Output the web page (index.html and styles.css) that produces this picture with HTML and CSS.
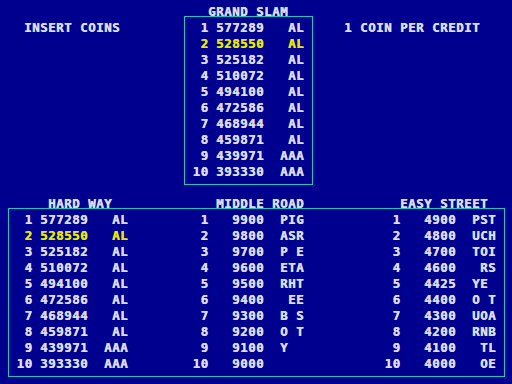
FILE: index.html
```html
<!DOCTYPE html>
<html>
<head>
<meta charset="utf-8">
<title>High Scores</title>
<link rel="stylesheet" href="styles.css">
</head>
<body>
<div class="screen">
  <div class="top">
    <div class="insert">INSERT COINS</div>
    <div class="grand">
      <div class="title">GRAND SLAM</div>
      <div class="board small">
        <div class="row"><span class="rank">1</span><span class="score">577289</span><span class="name"> AL</span></div>
        <div class="row hi"><span class="rank">2</span><span class="score">528550</span><span class="name"> AL</span></div>
        <div class="row"><span class="rank">3</span><span class="score">525182</span><span class="name"> AL</span></div>
        <div class="row"><span class="rank">4</span><span class="score">510072</span><span class="name"> AL</span></div>
        <div class="row"><span class="rank">5</span><span class="score">494100</span><span class="name"> AL</span></div>
        <div class="row"><span class="rank">6</span><span class="score">472586</span><span class="name"> AL</span></div>
        <div class="row"><span class="rank">7</span><span class="score">468944</span><span class="name"> AL</span></div>
        <div class="row"><span class="rank">8</span><span class="score">459871</span><span class="name"> AL</span></div>
        <div class="row"><span class="rank">9</span><span class="score">439971</span><span class="name">AAA</span></div>
        <div class="row"><span class="rank">10</span><span class="score">393330</span><span class="name">AAA</span></div>
      </div>
    </div>
    <div class="credit">1 COIN PER CREDIT</div>
  </div>

  <div class="titles">
    <div>HARD WAY</div>
    <div>MIDDLE ROAD</div>
    <div>EASY STREET</div>
  </div>
  <div class="board wide">
    <div class="table">
      <div class="row"><span class="rank">1</span><span class="score">577289</span><span class="name"> AL</span></div>
      <div class="row hi"><span class="rank">2</span><span class="score">528550</span><span class="name"> AL</span></div>
      <div class="row"><span class="rank">3</span><span class="score">525182</span><span class="name"> AL</span></div>
      <div class="row"><span class="rank">4</span><span class="score">510072</span><span class="name"> AL</span></div>
      <div class="row"><span class="rank">5</span><span class="score">494100</span><span class="name"> AL</span></div>
      <div class="row"><span class="rank">6</span><span class="score">472586</span><span class="name"> AL</span></div>
      <div class="row"><span class="rank">7</span><span class="score">468944</span><span class="name"> AL</span></div>
      <div class="row"><span class="rank">8</span><span class="score">459871</span><span class="name"> AL</span></div>
      <div class="row"><span class="rank">9</span><span class="score">439971</span><span class="name">AAA</span></div>
      <div class="row"><span class="rank">10</span><span class="score">393330</span><span class="name">AAA</span></div>
    </div>
    <div class="table short">
      <div class="row"><span class="rank">1</span><span class="score">9900</span><span class="name">PIG</span></div>
      <div class="row"><span class="rank">2</span><span class="score">9800</span><span class="name">ASR</span></div>
      <div class="row"><span class="rank">3</span><span class="score">9700</span><span class="name">P E</span></div>
      <div class="row"><span class="rank">4</span><span class="score">9600</span><span class="name">ETA</span></div>
      <div class="row"><span class="rank">5</span><span class="score">9500</span><span class="name">RHT</span></div>
      <div class="row"><span class="rank">6</span><span class="score">9400</span><span class="name"> EE</span></div>
      <div class="row"><span class="rank">7</span><span class="score">9300</span><span class="name">B S</span></div>
      <div class="row"><span class="rank">8</span><span class="score">9200</span><span class="name">O T</span></div>
      <div class="row"><span class="rank">9</span><span class="score">9100</span><span class="name">Y  </span></div>
      <div class="row"><span class="rank">10</span><span class="score">9000</span><span class="name">   </span></div>
    </div>
    <div class="table short">
      <div class="row"><span class="rank">1</span><span class="score">4900</span><span class="name">PST</span></div>
      <div class="row"><span class="rank">2</span><span class="score">4800</span><span class="name">UCH</span></div>
      <div class="row"><span class="rank">3</span><span class="score">4700</span><span class="name">TOI</span></div>
      <div class="row"><span class="rank">4</span><span class="score">4600</span><span class="name"> RS</span></div>
      <div class="row"><span class="rank">5</span><span class="score">4425</span><span class="name">YE </span></div>
      <div class="row"><span class="rank">6</span><span class="score">4400</span><span class="name">O T</span></div>
      <div class="row"><span class="rank">7</span><span class="score">4300</span><span class="name">UOA</span></div>
      <div class="row"><span class="rank">8</span><span class="score">4200</span><span class="name">RNB</span></div>
      <div class="row"><span class="rank">9</span><span class="score">4100</span><span class="name"> TL</span></div>
      <div class="row"><span class="rank">10</span><span class="score">4000</span><span class="name"> OE</span></div>
    </div>
  </div>
</div>
</body>
</html>
```
FILE: styles.css
```css
html, body {
  margin: 0;
  padding: 0;
  background: #00008e;
}

/* 8px character cells, 8px text rows */
.screen {
  width: 512px;
  height: 384px;
  overflow: hidden;
  background: #00008e;
  color: #dcdcec;
  font-family: "DejaVu Sans Mono", "Liberation Mono", monospace;
  font-weight: bold;
  font-size: 12.5px;
  letter-spacing: 0.47px;
  line-height: 8px;
  white-space: nowrap;
  /* heavier, blockier strokes */
  text-shadow: 0.6px 0 0 currentColor;
}

.top {
  display: grid;
  grid-template-columns: 184px 129px 1fr;
  padding-top: 8px;
}

.insert {
  padding: 16px 0 0 24px;
}

.credit {
  padding: 16px 0 0 31px;
}

.grand .title {
  padding-left: 24px;
}

.board {
  border: 1px solid #1cc4c4;
  padding: 7px 8px 8px 7px;
}

.board.small {
  display: grid;
  row-gap: 8px;
}

.titles {
  display: grid;
  grid-template-columns: 168px 184px 1fr;
  padding-left: 48px;
  margin-top: 15px;
}

.board.wide {
  margin-left: 8px;
  width: 497px;
  box-sizing: border-box;
  display: grid;
  grid-template-columns: 176px 192px 112px;
}

.table {
  display: grid;
  row-gap: 8px;
}

.row {
  display: grid;
  grid-template-columns: 16px 56px 24px;
  column-gap: 8px;
  height: 8px;
}

.rank {
  text-align: right;
  margin-right: -0.47px;
}

.name {
  white-space: pre;
}

.short .score {
  padding-left: 16px;
}

.hi {
  color: #e8e800;
}
```
